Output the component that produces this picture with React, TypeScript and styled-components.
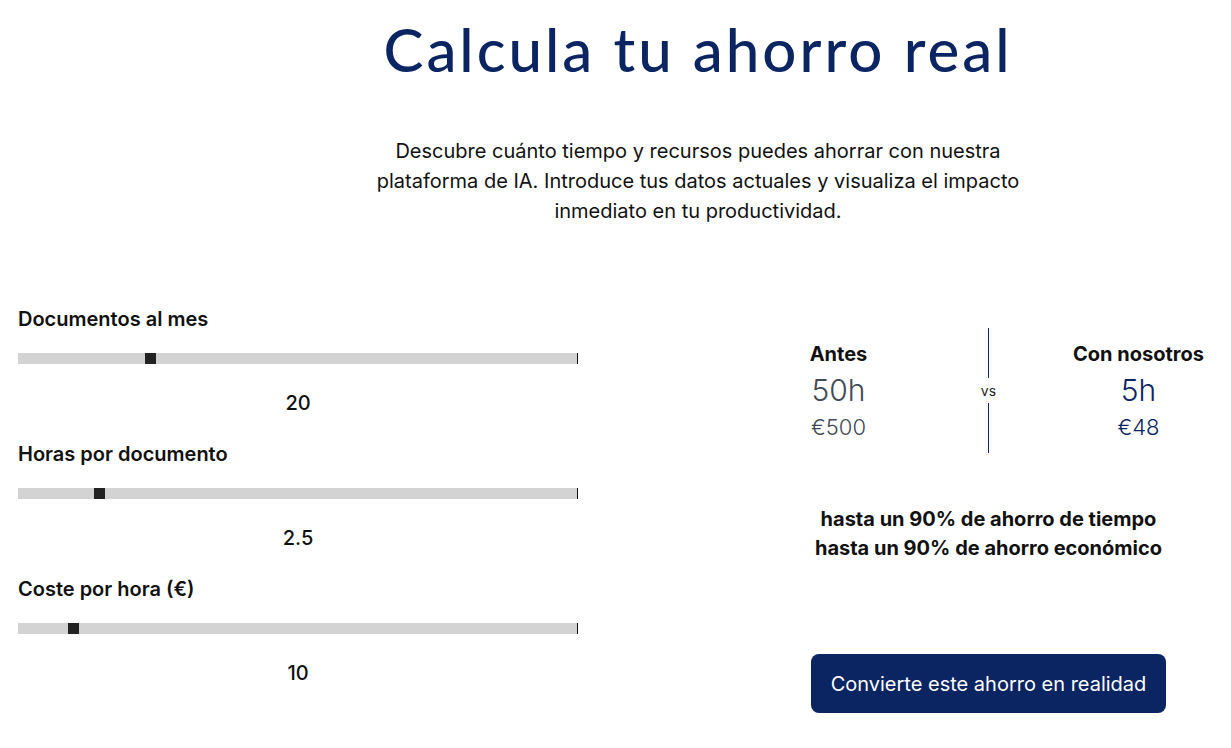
import React from "react";
import styled, { createGlobalStyle } from "styled-components";

const GlobalStyle = createGlobalStyle`
  html, body {
    margin: 0;
    padding: 0;
    background: #ffffff;
    overflow-x: hidden;
  }
  body {
    font-family: Inter, "Noto Sans", sans-serif;
    color: #111111;
  }
  * { box-sizing: border-box; }
`;

const NAVY = "#0b2462";

const Page = styled.div`
  width: 1396px;
  padding: 0 18px;
`;

const Header = styled.header`
  display: flex;
  flex-direction: column;
  align-items: center;
`;

const Title = styled.h1`
  margin: 0;
  padding-top: 13px;
  font-family: Lato, "Noto Sans", sans-serif;
  font-weight: 500;
  font-size: 60px;
  line-height: 72px;
  color: ${NAVY};
  letter-spacing: 3px;
`;

const Lead = styled.p`
  margin: 51px 0 0;
  max-width: 660px;
  text-align: center;
  font-size: 20px;
  line-height: 30px;
  color: #111111;
`;

const Section = styled.section`
  display: grid;
  grid-template-columns: 560px 583px;
  column-gap: 119px;
  align-items: start;
  margin-top: 80px;
`;

const Controls = styled.div`
  display: flex;
  flex-direction: column;
  gap: 23px;
`;

const Field = styled.div`
  display: flex;
  flex-direction: column;
`;

const Label = styled.div`
  font-size: 20px;
  font-weight: 600;
  line-height: 27px;
`;

const Track = styled.div`
  position: relative;
  margin-top: 20px;
  height: 11px;
  width: 560px;
  background: #d3d3d3;
  border-right: 1px solid #111111;
`;

const Thumb = styled.div`
  position: absolute;
  top: 0;
  width: 11px;
  height: 11px;
  background: #222222;
`;

const Value = styled.div`
  margin-top: 24px;
  text-align: center;
  font-size: 20px;
  font-weight: 500;
  line-height: 30px;
`;

const Results = styled.div`
  display: flex;
  flex-direction: column;
  align-items: center;
  margin-top: 22px;
`;

const Compare = styled.div`
  width: 100%;
  display: grid;
  grid-template-columns: 1fr auto 1fr;
  align-items: center;
`;

const Stat = styled.div<{ $accent?: boolean }>`
  display: flex;
  flex-direction: column;
  align-items: center;
  color: ${(p) => (p.$accent ? NAVY : "#3f4a56")};
`;

const StatTitle = styled.div`
  font-size: 20px;
  font-weight: 700;
  line-height: 28px;
  color: #111111;
`;

const StatHours = styled.div`
  font-size: 30px;
  font-weight: 300;
  line-height: 44px;
`;

const StatMoney = styled.div`
  font-size: 22px;
  font-weight: 300;
  line-height: 30px;
`;

const Divider = styled.div`
  display: flex;
  flex-direction: column;
  align-items: center;
  width: 17px;
`;

const Rule = styled.div`
  width: 1px;
  height: 50px;
  background: ${NAVY};
`;

const Vs = styled.div`
  font-size: 14px;
  line-height: 25px;
  color: #222222;
`;

const Savings = styled.div`
  margin-top: 52px;
  text-align: center;
  font-size: 20px;
  font-weight: 700;
  line-height: 29px;
`;

const Cta = styled.button`
  margin-top: 91px;
  height: 59px;
  padding: 0 20px;
  border: none;
  border-radius: 8px;
  background: ${NAVY};
  color: #ffffff;
  font-family: Inter, "Noto Sans", sans-serif;
  font-size: 20px;
  font-weight: 400;
  cursor: pointer;
`;

type Slider = { label: string; value: number; min: number; max: number; text: string };

const sliders: Slider[] = [
  { label: "Documentos al mes", value: 20, min: 0, max: 86, text: "20" },
  { label: "Horas por documento", value: 2.5, min: 0.5, max: 15, text: "2.5" },
  { label: "Coste por hora (€)", value: 10, min: 5, max: 60, text: "10" },
];

const TRACK_INNER = 559;
const THUMB = 11;

export default function App() {
  return (
    <>
      <GlobalStyle />
      <Page>
        <Header>
          <Title>Calcula tu ahorro real</Title>
          <Lead>
            Descubre cuánto tiempo y recursos puedes ahorrar con nuestra plataforma de IA.
            Introduce tus datos actuales y visualiza el impacto inmediato en tu productividad.
          </Lead>
        </Header>
        <Section>
          <Controls>
            {sliders.map((s) => {
              const f = (s.value - s.min) / (s.max - s.min);
              return (
                <Field key={s.label}>
                  <Label>{s.label}</Label>
                  <Track>
                    <Thumb style={{ left: `${Math.round(f * (TRACK_INNER - THUMB))}px` }} />
                  </Track>
                  <Value>{s.text}</Value>
                </Field>
              );
            })}
          </Controls>
          <Results>
            <Compare>
              <Stat>
                <StatTitle>Antes</StatTitle>
                <StatHours>50h</StatHours>
                <StatMoney>€500</StatMoney>
              </Stat>
              <Divider>
                <Rule />
                <Vs>vs</Vs>
                <Rule />
              </Divider>
              <Stat $accent>
                <StatTitle>Con nosotros</StatTitle>
                <StatHours>5h</StatHours>
                <StatMoney>€48</StatMoney>
              </Stat>
            </Compare>
            <Savings>
              hasta un 90% de ahorro de tiempo
              <br />
              hasta un 90% de ahorro económico
            </Savings>
            <Cta>Convierte este ahorro en realidad</Cta>
          </Results>
        </Section>
      </Page>
    </>
  );
}
